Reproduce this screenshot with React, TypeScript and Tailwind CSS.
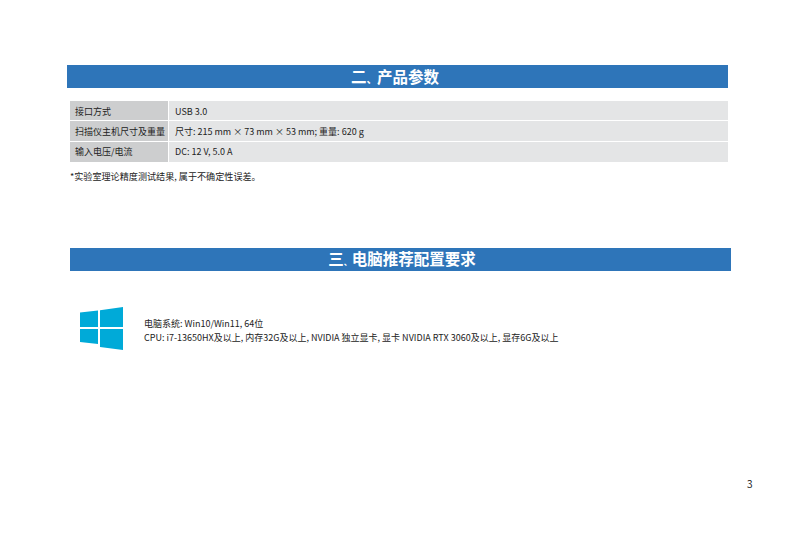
import React from 'react';

const font = "[font-family:'Noto_Sans_CJK_SC','Noto_Sans',sans-serif]";

const rows = [
  { label: '接口方式', value: 'USB 3.0', h: 'h-[19px]', pad: 'pt-[1px]' },
  { label: '扫描仪主机尺寸及重量', value: '尺寸: 215 mm × 73 mm × 53 mm; 重量: 620 g', h: 'h-[20px]', pad: '' },
  { label: '输入电压/电流', value: 'DC: 12 V, 5.0 A', h: 'h-[20px]', pad: 'pb-[2px]' },
];

const Banner: React.FC<{ head: string; tail: string; className: string; markClass: string }> = ({ head, tail, className, markClass }) => (
  <div className={`h-[23px] w-[661px] bg-[#2e75b9] flex items-center justify-center text-white text-[15.5px] font-bold leading-none whitespace-nowrap ${className}`}>
    <div className="flex items-baseline">
      <span>{head}</span>
      <span className={markClass}>、</span>
      <span>{tail}</span>
    </div>
  </div>
);

const WindowsLogo = () => (
  <svg width="44" height="44" viewBox="0 0 44 44" className="shrink-0">
    <path fill="#00aad8" d="M0 5.5 L18 3.5 V20 H0 Z M20 3.2 L43 0 V20 H20 Z M0 22 H18 V37 L0 35 Z M20 22 H43 V43 L20 40 Z" />
  </svg>
);

export default function App() {
  return (
    <div className={`w-[793px] h-[536px] bg-white overflow-hidden flex flex-col text-[#222] ${font}`}>
      <Banner head="二" tail="产品参数" markClass="text-[10.5px]" className="mt-[65px] ml-[67px] pr-[5px]" />

      <div className="mt-[13px] ml-[70px] w-[658px] flex flex-col gap-[1px] text-[9px] leading-none">
        {rows.map((r) => (
          <div key={r.label} className={`flex gap-[1px] ${r.h}`}>
            <div className={`w-[98px] bg-[#cdcecf] flex items-center pl-[5px] whitespace-nowrap ${r.pad}`}>{r.label}</div>
            <div className={`flex-1 bg-[#e4e5e6] flex items-center pl-[6px] whitespace-pre ${r.pad}`}>{r.value}</div>
          </div>
        ))}
      </div>

      <p className="mt-[8px] ml-[70px] text-[9.1px] leading-[12px]">*实验室理论精度测试结果, 属于不确定性误差。</p>

      <Banner head="三" tail="电脑推荐配置要求" markClass="text-[8px]" className="mt-[66px] ml-[70px] pl-[3px] pb-[1px]" />

      <div className="mt-[36px] ml-[80px] flex items-center gap-[20px]">
        <WindowsLogo />
        <div className="text-[9px] leading-[14px] whitespace-pre mt-[4px]">
          <p>电脑系统: Win10/Win11, 64位</p>
          <p>CPU: i7-13650HX及以上, 内存32G及以上, NVIDIA 独立显卡, 显卡 NVIDIA RTX 3060及以上, 显存6G及以上</p>
        </div>
      </div>

      <div className="mt-[128px] ml-[747px] text-[10px] leading-none text-[#222]">3</div>
    </div>
  );
}
